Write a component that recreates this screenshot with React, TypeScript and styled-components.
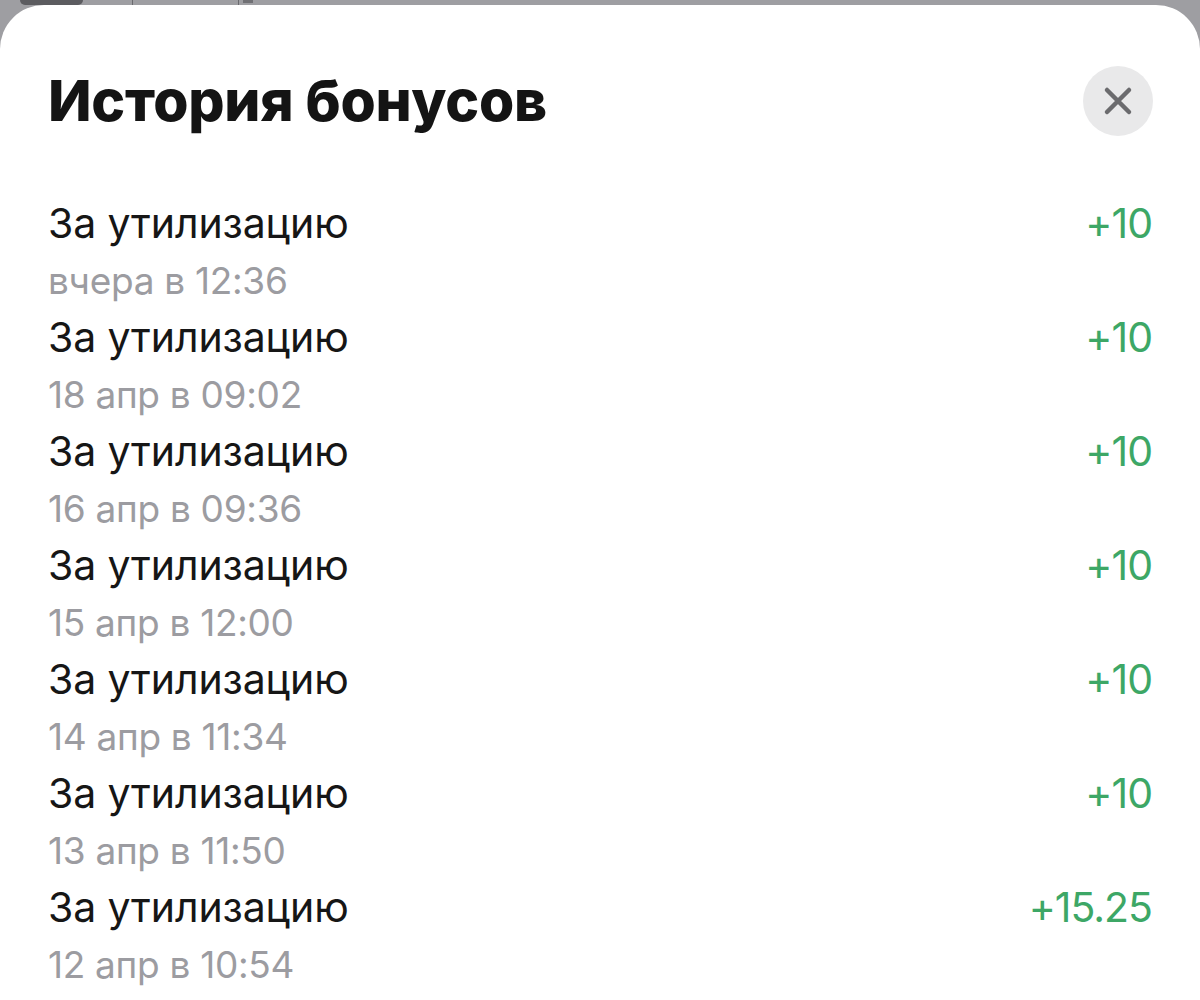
import styled, { createGlobalStyle } from "styled-components";

const GlobalStyle = createGlobalStyle`
    html, body {
        margin: 0;
        padding: 0;
        background: #9e9ea2;
    }
    body {
        font-family: Inter, "Noto Sans", sans-serif;
    }
`;

const items = [
    { title: "За утилизацию", date: "вчера в 12:36", amount: "+10" },
    { title: "За утилизацию", date: "18 апр в 09:02", amount: "+10" },
    { title: "За утилизацию", date: "16 апр в 09:36", amount: "+10" },
    { title: "За утилизацию", date: "15 апр в 12:00", amount: "+10" },
    { title: "За утилизацию", date: "14 апр в 11:34", amount: "+10" },
    { title: "За утилизацию", date: "13 апр в 11:50", amount: "+10" },
    { title: "За утилизацию", date: "12 апр в 10:54", amount: "+15.25" },
];

const App = () => {
    return (
        <Page>
            <GlobalStyle />
            <Backdrop>
                <div className="pill"></div>
                <div className="line"></div>
                <div className="line"></div>
                <div className="tab"></div>
            </Backdrop>
            <Sheet>
                <Header>
                    <h1>История бонусов</h1>
                    <CloseButton aria-label="Закрыть">
                        <svg width="30" height="30" viewBox="0 0 30 30">
                            <path
                                d="M4 4 L26 26 M26 4 L4 26"
                                stroke="#6b6b6e"
                                strokeWidth="4.5"
                                strokeLinecap="round"
                            />
                        </svg>
                    </CloseButton>
                </Header>
                <List>
                    {items.map((item, i) => (
                        <Row key={i}>
                            <div className="info">
                                <span className="title">{item.title}</span>
                                <span className="date">{item.date}</span>
                            </div>
                            <Amount>{item.amount}</Amount>
                        </Row>
                    ))}
                </List>
            </Sheet>
        </Page>
    );
};

export default App;

const Page = styled.div`
    width: 1200px;
    height: 1000px;
    overflow: hidden;
    background: #9e9ea2;
`;
const Backdrop = styled.div`
    height: 5px;
    display: flex;
    align-items: flex-start;
    .pill {
        width: 63px;
        height: 5px;
        margin-left: 20px;
        background-color: #5c5c60;
        border-radius: 0 0 6px 6px;
    }
    .line {
        width: 1px;
        height: 5px;
        background-color: #6a6a6e;
        margin-left: 49px;
    }
    .line + .line {
        margin-left: 105px;
    }
    .tab {
        width: 10px;
        height: 3px;
        margin-left: 4px;
        background-color: #707074;
    }
`;
const Sheet = styled.div`
    height: 995px;
    box-sizing: border-box;
    background-color: #ffffff;
    border-radius: 44px 44px 0 0;
    padding: 58px 48px 0;
`;
const Header = styled.div`
    display: flex;
    align-items: center;
    justify-content: space-between;
    h1 {
        margin: 0;
        font-size: 57px;
        font-weight: 800;
        letter-spacing: -0.3px;
        color: #141414;
        line-height: 76px;
    }
`;
const CloseButton = styled.button`
    width: 70px;
    height: 70px;
    border: none;
    border-radius: 50%;
    background-color: #e9e9ea;
    display: flex;
    align-items: center;
    justify-content: center;
    padding: 0;
    margin-right: -1px;
`;
const List = styled.div`
    margin-top: 56px;
    display: flex;
    flex-direction: column;
`;
const Row = styled.div`
    display: flex;
    justify-content: space-between;
    align-items: flex-start;
    height: 114px;
    .info {
        display: flex;
        flex-direction: column;
    }
    .title {
        font-size: 41px;
        line-height: 57px;
        color: #161616;
        letter-spacing: -0.1px;
    }
    .date {
        font-size: 37px;
        line-height: 57px;
        color: #9c9ca1;
        letter-spacing: -0.3px;
    }
`;
const Amount = styled.span`
    font-size: 41px;
    line-height: 57px;
    color: #3da766;
    letter-spacing: -1px;
`;
